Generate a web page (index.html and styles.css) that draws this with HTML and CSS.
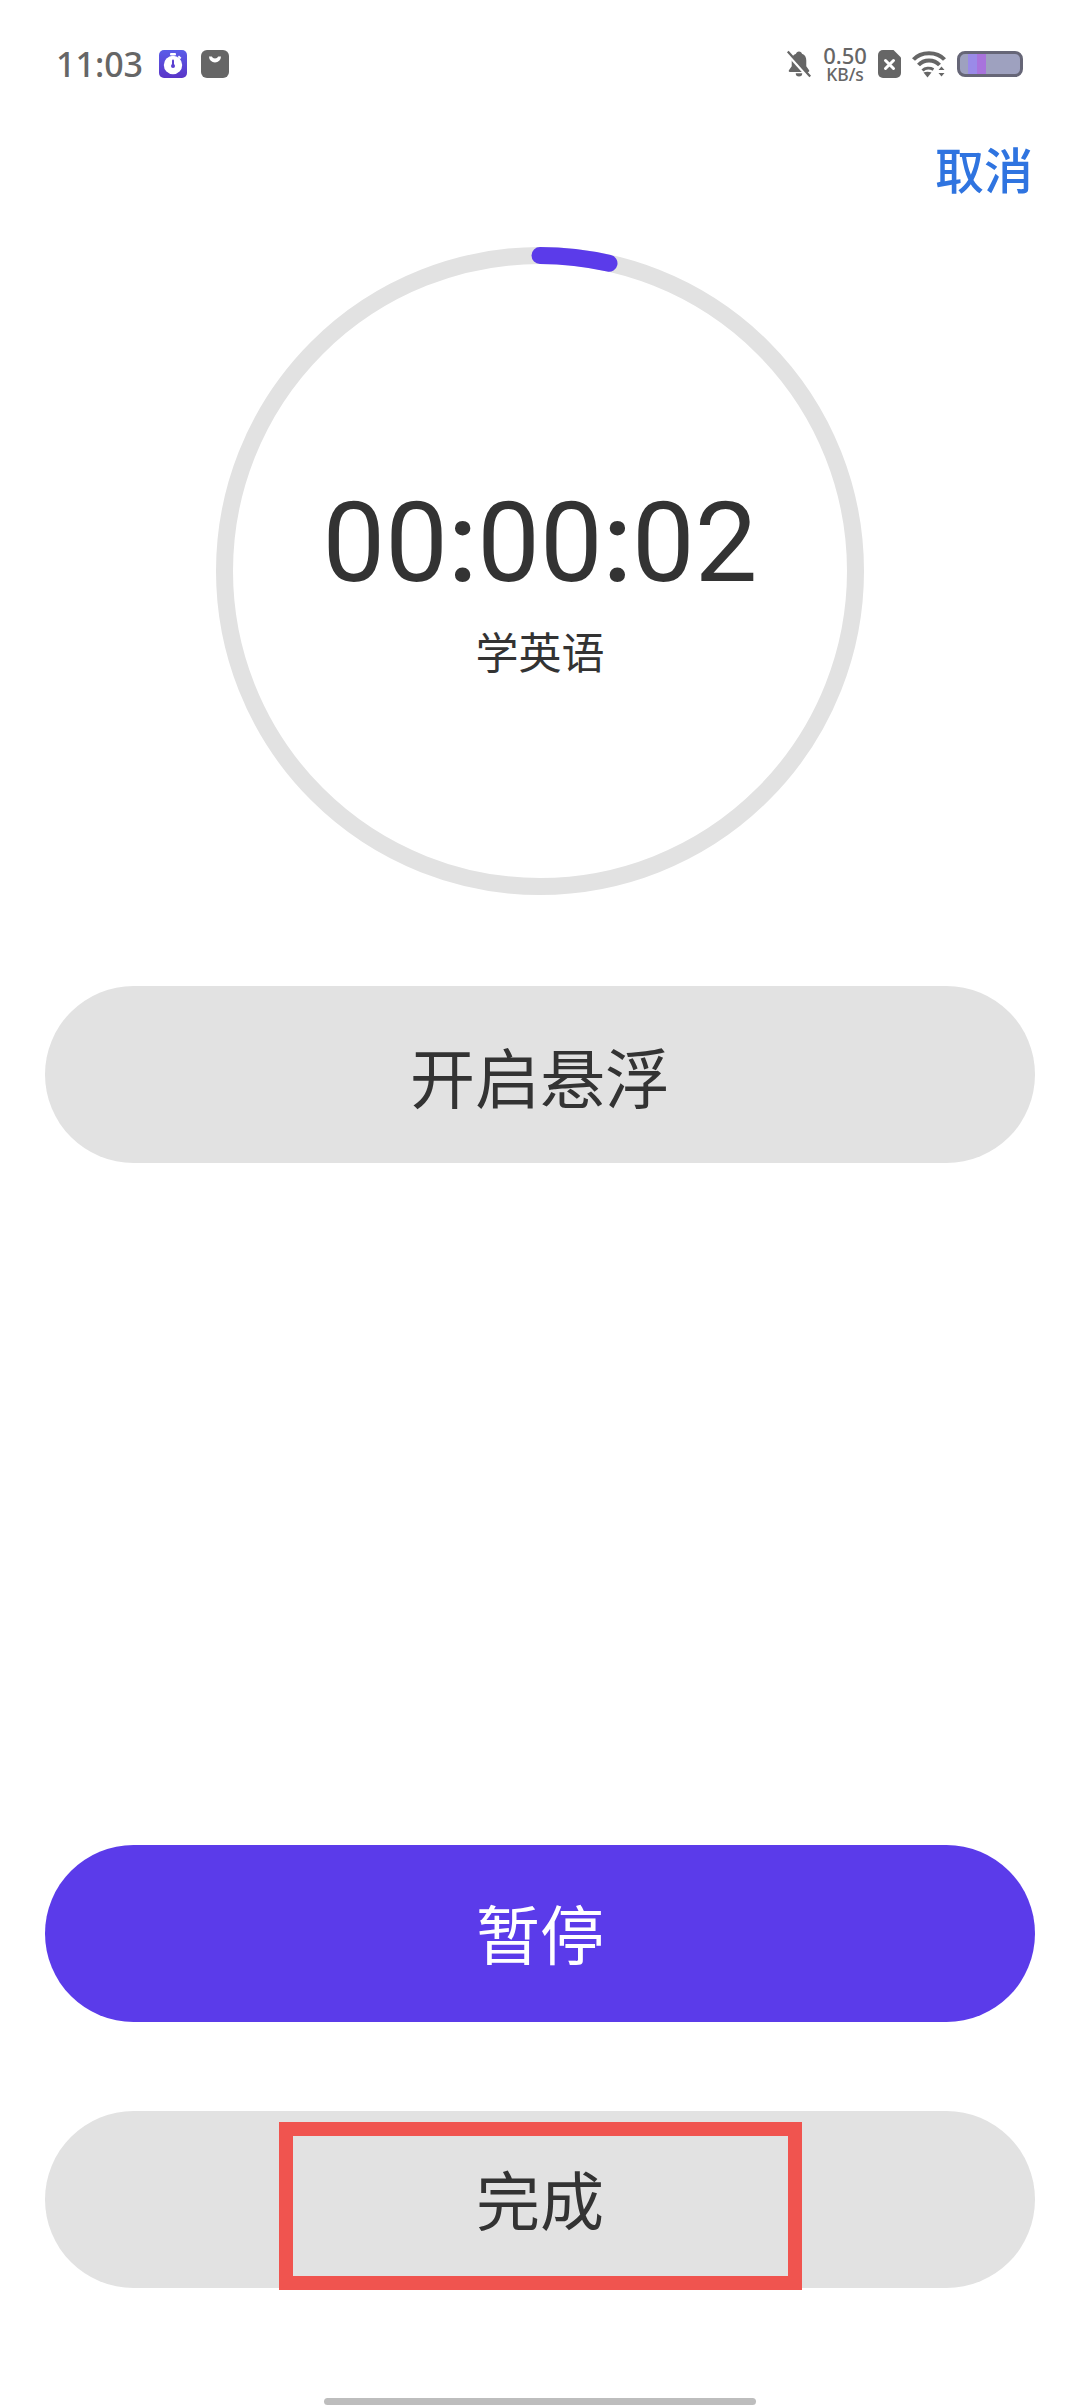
FILE: index.html
```html
<!DOCTYPE html>
<html lang="zh-CN">
<head>
<meta charset="utf-8">
<title>学英语</title>
<link rel="stylesheet" href="styles.css">
</head>
<body>
<div class="page">
  <header class="status">
    <div class="status-left">
      <span class="clock">11:03</span>
      <svg class="app-icon" width="28" height="28" viewBox="0 0 28 28">
        <defs><linearGradient id="tile" x1="0" y1="0" x2="0" y2="1"><stop offset="0" stop-color="#5a5ce8"/><stop offset="1" stop-color="#5a35c8"/></linearGradient></defs>
        <rect width="28" height="28" rx="5" fill="url(#tile)"/>
        <rect x="11" y="3" width="6" height="2.400" rx="1" fill="#fff"/>
        <path d="M20 5.600l2.400 2.200-1.400 1.400-2.400-2.200z" fill="#fff"/>
        <circle cx="14" cy="15" r="9.200" fill="#fff"/>
        <rect x="13" y="9.500" width="2" height="6" rx="1" fill="#5a3fd0"/>
        <circle cx="14" cy="16" r="2" fill="#5a3fd0"/>
      </svg>
      <svg class="app-icon" width="28" height="28" viewBox="0 0 28 28">
        <rect width="28" height="28" rx="6" fill="#666"/>
        <path d="M8 6.500a6 6 0 0 0 12 0h-2.800a3.400 3 0 0 1-6.400 0z" fill="#fff"/>
      </svg>
    </div>
    <div class="status-right">
      <svg width="26" height="28" viewBox="0 0 26 30">
        <path d="M13 1.500c1.800 0 3 1.200 3.200 2.600 3.200 1 4.600 3.800 4.600 7v6.200l3 4.400c.5.900 0 1.800-1 1.800H3.200c-1 0-1.500-.9-1-1.800l3-4.400V11c0-3.200 1.400-6 4.600-7 .2-1.400 1.400-2.500 3.200-2.500z" fill="#666"/>
        <path d="M9.500 25h7a3.500 3.500 0 0 1-7 0z" fill="#666"/>
        <path d="M0.500 3.500L23.500 29" stroke="#fff" stroke-width="4"/>
        <path d="M1 1.500L25 28.500" stroke="#666" stroke-width="2.400"/>
      </svg>
      <div class="speed"><span class="speed-num">0.50</span><span class="speed-unit">KB/s</span></div>
      <svg width="23" height="28" viewBox="0 0 23 28">
        <path d="M5 0h10.500L23 7.500V23a5 5 0 0 1-5 5H5a5 5 0 0 1-5-5V5a5 5 0 0 1 5-5z" fill="#666"/>
        <path d="M7.500 10.500l8 8M15.500 10.500l-8 8" stroke="#fff" stroke-width="3" stroke-linecap="round"/>
      </svg>
      <svg width="34" height="28" viewBox="0 0 34 28">
        <path d="M1.500 9.500C9 1 25 1 32.500 9.500" fill="none" stroke="#666" stroke-width="4"/>
        <path d="M6.500 15C12 9 22 9 27.500 15" fill="none" stroke="#666" stroke-width="4"/>
        <path d="M10.500 20.500c2.500-2.500 7-3 11-1" fill="none" stroke="#666" stroke-width="3"/>
        <path d="M11.500 22.500c2.500-1 5.500-1 8 0L15.500 27.500z" fill="#666"/>
        <path d="M26.500 20l3-3.500 3 3.500zM26.500 23h6l-3 3.500z" fill="#666"/>
      </svg>
      <div class="battery">
        <span class="battery-cell cell-a"></span>
        <span class="battery-cell cell-b"></span>
      </div>
    </div>
  </header>

  <div class="topbar"><span class="cancel">取消</span></div>

  <div class="ring-wrap">
    <svg class="ring" width="648" height="648" viewBox="0 0 648 648">
      <circle cx="324" cy="324" r="315.500" fill="none" stroke="#e2e2e2" stroke-width="17"/>
      <path d="M324 8.500A315.500 315.500 0 0 1 393 16.300" fill="none" stroke="#5b3bea" stroke-width="17" stroke-linecap="round"/>
    </svg>
    <div class="ring-text">
      <div class="time">00<span class="colon">:</span>00<span class="colon">:</span>02</div>
      <div class="task">学英语</div>
    </div>
  </div>

  <button class="pill pill-float">开启悬浮</button>

  <div class="actions">
    <button class="pill pill-primary">暂停</button>
    <div class="done-wrap">
      <button class="pill pill-done">完成</button>
      <div class="highlight"></div>
    </div>
  </div>

  <div class="home-bar"></div>
</div>
</body>
</html>
```
FILE: styles.css
```css
* { box-sizing: border-box; }
html, body { margin: 0; padding: 0; background: #fff; }
body { font-family: "Noto Sans", "Noto Sans CJK SC", sans-serif; color: #333; }
.page { width: 1080px; height: 2408px; display: flex; flex-direction: column; overflow: hidden; position: relative; }

.status { height: 64px; margin-top: 32px; padding: 0 57px 0 56px; display: flex; justify-content: space-between; align-items: center; flex: none; }
.status-left { display: flex; align-items: center; gap: 14px; }
.clock { font-size: 34px; font-weight: 500; color: #666; line-height: 64px; width: 89px; }
.app-icon { display: block; }
.status-right { display: flex; align-items: center; gap: 11px; }
.status-right svg { display: block; }
.speed { display: flex; flex-direction: column; align-items: center; color: #666; font-weight: 500; width: 44px; }
.speed-num { font-size: 22px; line-height: 20px; }
.speed-unit { font-size: 17.5px; line-height: 19px; }
.battery { width: 66px; height: 26px; border: 3px solid #667; border-radius: 8px; background: #9ea1bf; display: flex; padding-left: 8px; overflow: hidden; }
.battery-cell { width: 9px; height: 100%; }
.cell-a { background: #9a8ae8; }
.cell-b { background: #a873dc; }

.topbar { height: 151px; padding: 0 47px 3px 0; display: flex; justify-content: flex-end; align-items: center; flex: none; }
.cancel { font-size: 49px; line-height: 60px; font-weight: 500; color: #2f74e0; }

.ring-wrap { position: relative; width: 648px; height: 648px; margin: 0 auto; flex: none; }
.ring { display: block; }
.ring-text { position: absolute; inset: 0; display: flex; flex-direction: column; align-items: center; }
.time { font-family: Roboto, sans-serif; font-size: 111.5px; line-height: 132px; margin-top: 230px; color: #333; }
.colon { font-weight: 500; }
.task { font-size: 43px; line-height: 56px; margin-top: 16px; color: #333; }

.pill { display: flex; align-items: center; justify-content: center; width: 990px; height: 177px; border: 0; border-radius: 89px; font-family: inherit; font-size: 65px; padding: 0; background: #e2e2e2; color: #333; }
.pill-float { margin: 91px auto 0; flex: none; }
.actions { margin-top: auto; display: flex; flex-direction: column; align-items: center; gap: 89px; padding-bottom: 120px; }
.pill-primary { background: #5b3bea; color: #fff; padding-bottom: 4px; font-size: 64px; }
.pill-done { padding-bottom: 4px; font-size: 64px; }
.done-wrap { position: relative; }
.highlight { position: absolute; left: 234px; top: 11px; width: 523px; height: 168px; border: 14px solid #f0544f; }
.home-bar { position: absolute; left: 324px; top: 2398px; width: 432px; height: 7px; border-radius: 4px; background: #bdbdbd; }
```
